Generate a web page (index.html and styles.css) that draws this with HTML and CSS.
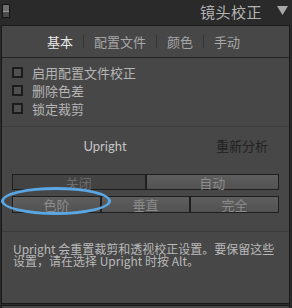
FILE: index.html
```html
<!DOCTYPE html>
<html>
<head>
<meta charset="utf-8">
<link rel="stylesheet" href="styles.css">
</head>
<body>
<div class="header">
  <div class="grip"><span class="grip-top"></span><span class="grip-bot"></span></div>
  <div class="title">镜头校正</div>
  <svg class="tri" width="11" height="9" viewBox="0 0 11 9"><polygon points="0,0 11,0 5.5,9" fill="#a9a9a9"/></svg>
</div>
<div class="panel">
  <div class="tabs">
    <span class="tab active">基本</span>
    <span class="sep"></span>
    <span class="tab">配置文件</span>
    <span class="sep"></span>
    <span class="tab">颜色</span>
    <span class="sep"></span>
    <span class="tab">手动</span>
  </div>
  <div class="checks">
    <div class="check"><span class="box"></span><span>启用配置文件校正</span></div>
    <div class="check"><span class="box"></span><span>删除色差</span></div>
    <div class="check"><span class="box"></span><span>锁定裁剪</span></div>
  </div>
  <div class="upright">
    <div class="up-head">
      <span class="up-label">Upright</span>
      <span class="up-re">重新分析</span>
    </div>
    <div class="btn-row two">
      <div class="btn dark">关闭</div>
      <div class="btn">自动</div>
    </div>
    <div class="btn-row three">
      <div class="btn">色阶</div>
      <div class="btn">垂直</div>
      <div class="btn">完全</div>
      <div class="ring"></div>
    </div>
  </div>
  <div class="note">Upright 会重置裁剪和透视校正设置。要保留这些设置，请在选择 Upright 时按 Alt。</div>
</div>
<div class="next"></div>
</body>
</html>
```
FILE: styles.css
```css
html, body {
  margin: 0;
  padding: 0;
  background: #2a2a2a;
  width: 292px;
  height: 308px;
  overflow: hidden;
  font-family: "Noto Sans CJK SC", "Open Sans", sans-serif;
}
.header {
  height: 25px;
  display: flex;
  align-items: center;
  padding: 0 4px 0 2px;
  box-sizing: border-box;
}
.grip {
  width: 8px;
  height: 14px;
  border: 1px solid #151515;
  box-sizing: border-box;
  display: flex;
  flex-direction: column;
  margin-top: -3px;
}
.grip-top { flex: 1; background: #6e6e6e; border-bottom: 1px solid #9a9a9a; }
.grip-bot { flex: 1; background: #4a4a4a; }
.title {
  margin-left: auto;
  color: #b4b4b4;
  font-size: 15px;
  letter-spacing: 0.5px;
  line-height: 25px;
  margin-right: 15px;
  margin-top: -3px;
}
.tri { margin-top: -4px; }
.panel {
  margin: 0 1px 0 1px;
  width: 289px;
  height: 279px;
  box-sizing: border-box;
  border: 1px solid #1a1a1a;
  background: #474747;
  display: flex;
  flex-direction: column;
}
.tabs {
  height: 32px;
  display: flex;
  align-items: center;
  justify-content: center;
  gap: 10px;
  border-bottom: 1px solid #262626;
  box-sizing: border-box;
  font-size: 13px;
  color: #a6a6a6;
  padding-right: 4px;
}
.tab.active { color: #e6e6e6; }
.sep { width: 1px; height: 13px; background: #333; }
.checks {
  display: flex;
  flex-direction: column;
  padding: 5px 0 0 10px;
  height: 69px;
  box-sizing: border-box;
  border-bottom: 1px solid #3c3c3c;
}
.check {
  display: flex;
  align-items: center;
  height: 18px;
  gap: 9px;
  font-size: 13px;
  color: #b5b5b5;
}
.box {
  width: 11px;
  height: 11px;
  box-sizing: border-box;
  border: 2px solid #1c1c1c;
  background: #505050;
}
.upright {
  height: 105px;
  border-bottom: 1px solid #3a3a3a;
  box-sizing: border-box;
  padding: 0 10px;
}
.up-head {
  height: 36px;
  display: flex;
  align-items: center;
  font-size: 13px;
}
.up-label {
  font-family: "Lato", "Open Sans", sans-serif;
  color: #c4c4c4;
  width: 186px;
  text-align: center;
  margin-top: 1px;
}
.up-re { color: #222; font-size: 13px; margin-left: 18px; }
.btn-row {
  display: flex;
  margin-top: 11px;
  position: relative;
}
.btn-row.three { margin-top: 6px; }
.btn {
  flex: 1;
  height: 17px;
  box-sizing: border-box;
  border: 1px solid #1e1e1e;
  background: linear-gradient(#5e5e5e, #525252);
  color: #8c8c8c;
  font-size: 13px;
  line-height: 15px;
  text-align: center;
}
.btn-row.two .btn { height: 16px; }
.btn.dark { background: #434343; color: #6c6c6c; }
.btn-row.three .btn { height: 17px; line-height: 15px; }
.ring {
  position: absolute;
  left: -11px;
  top: -9px;
  width: 104px;
  height: 22px;
  border: 3px solid #5aa7e4;
  border-radius: 50%;
}
.note {
  padding: 11px 10px 0 11px;
  font-size: 12px;
  line-height: 12px;
  color: #b9b9b9;
}
.next {
  margin: 1px 1px 0 1px;
  width: 289px;
  height: 4px;
  box-sizing: border-box;
  border-top: 1px solid #1a1a1a;
  border-left: 1px solid #1a1a1a;
  border-right: 1px solid #1a1a1a;
  background: #474747;
}
```
